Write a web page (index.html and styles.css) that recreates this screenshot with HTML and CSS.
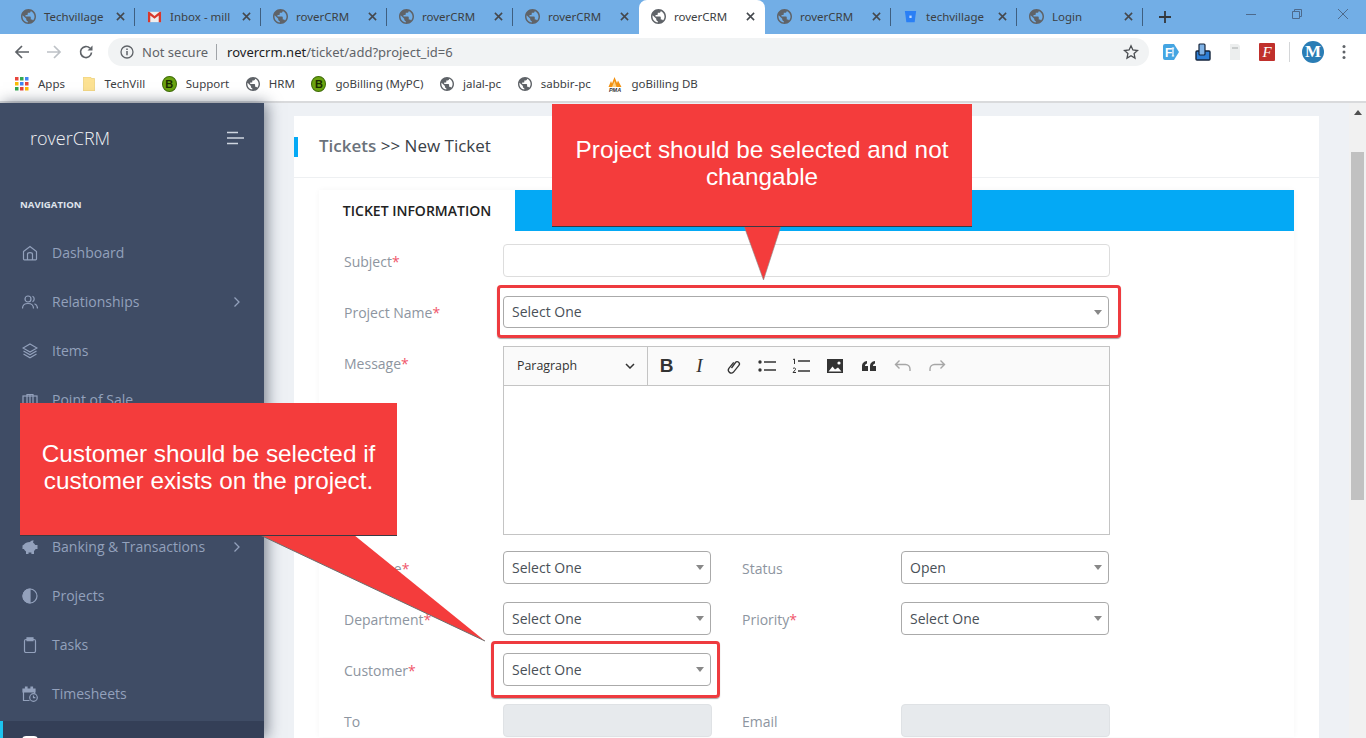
FILE: index.html
```html
<!DOCTYPE html>
<html lang="en">
<head>
    <meta charset="UTF-8">
    <meta name="viewport" content="width=device-width, initial-scale=1.0">
    <title>roverCRM</title>
    <link rel="stylesheet" href="styles.css">
</head>
<body>
    <svg class="defs" width="0" height="0">
        <symbol id="globe" viewBox="2 2 20 20"><path d="M12 2C6.48 2 2 6.48 2 12s4.48 10 10 10 10-4.48 10-10S17.52 2 12 2zm-1 17.93c-3.95-.49-7-3.85-7-7.93 0-.62.08-1.21.21-1.79L9 15v1c0 1.1.9 2 2 2v1.93zm6.9-2.54c-.26-.81-1-1.39-1.9-1.39h-1v-3c0-.55-.45-1-1-1H8v-2h2c.55 0 1-.45 1-1V7h2c1.1 0 2-.9 2-2v-.41c2.93 1.19 5 4.06 5 7.41 0 2.08-.8 3.97-2.1 5.39z" fill="#5f6368"/></symbol>
        <symbol id="close" viewBox="0 0 10 10"><path d="M1 1l8 8M9 1l-8 8" stroke="#44484d" stroke-width="1.7" fill="none"/></symbol>
        <symbol id="chev" viewBox="0 0 8 12"><path d="M1.5 1.5L6 6l-4.5 4.5" stroke="#93a1bc" stroke-width="1.3" fill="none"/></symbol>
    </svg>

    <!-- browser chrome -->
    <div class="tabstrip">
        <div class="tab"><svg class="fav"><use href="#globe"/></svg><span class="tab-title">Techvillage</span><svg class="tab-x"><use href="#close"/></svg></div>
        <div class="tab"><svg class="fav" viewBox="0 0 16 16"><rect x="1" y="3" width="14" height="11" fill="#eee"/><path d="M1 3v11h2.5V7L8 10.5 12.5 7v7H15V3h-1.5L8 7.5 2.500 3z" fill="#d8382c"/></svg><span class="tab-title">Inbox - mill</span><svg class="tab-x"><use href="#close"/></svg></div>
        <div class="tab"><svg class="fav"><use href="#globe"/></svg><span class="tab-title">roverCRM</span><svg class="tab-x"><use href="#close"/></svg></div>
        <div class="tab"><svg class="fav"><use href="#globe"/></svg><span class="tab-title">roverCRM</span><svg class="tab-x"><use href="#close"/></svg></div>
        <div class="tab no-sep"><svg class="fav"><use href="#globe"/></svg><span class="tab-title">roverCRM</span><svg class="tab-x"><use href="#close"/></svg></div>
        <div class="tab active"><svg class="fav"><use href="#globe"/></svg><span class="tab-title">roverCRM</span><svg class="tab-x"><use href="#close"/></svg></div>
        <div class="tab"><svg class="fav"><use href="#globe"/></svg><span class="tab-title">roverCRM</span><svg class="tab-x"><use href="#close"/></svg></div>
        <div class="tab"><svg class="fav" viewBox="0 0 16 16"><path d="M2 2h12l-1.600 12H3.600z" fill="#2a7ff5"/><rect x="6.800" y="7" width="2.400" height="2.600" fill="#bcd8ff"/></svg><span class="tab-title">techvillage</span><svg class="tab-x"><use href="#close"/></svg></div>
        <div class="tab"><svg class="fav"><use href="#globe"/></svg><span class="tab-title">Login</span><svg class="tab-x"><use href="#close"/></svg></div>
        <svg class="new-tab" viewBox="0 0 12 12"><path d="M6 0v12M0 6h12" stroke="#33373b" stroke-width="1.800"/></svg>
        <div class="win-btns">
            <svg viewBox="0 0 10 10"><path d="M0 5.500h10" stroke="#4d6a8c"/></svg>
            <svg viewBox="0 0 10 10"><path d="M.5 2.500h7v7h-7zM2.500 2.500v-2h7v7h-2" stroke="#4d6a8c" fill="none"/></svg>
            <svg viewBox="0 0 10 10"><path d="M0 0l10 10M10 0L0 10" stroke="#4d6a8c"/></svg>
        </div>
    </div>

    <div class="toolbar">
        <svg class="nav-btn" viewBox="0 0 16 16"><path d="M15 8H2M8 2L2 8l6 6" stroke="#5f6368" stroke-width="1.700" fill="none"/></svg>
        <svg class="nav-btn" viewBox="0 0 16 16"><path d="M1 8h13M8 2l6 6-6 6" stroke="#bdc1c6" stroke-width="1.700" fill="none"/></svg>
        <svg class="nav-btn" viewBox="0 0 16 16"><path d="M13.500 8.500a5.500 5.500 0 1 1-1.600-4.400" stroke="#5f6368" stroke-width="1.700" fill="none"/><path d="M14.500 1.500v5h-5z" fill="#5f6368"/></svg>
        <div class="omnibox">
            <svg class="info" viewBox="0 0 14 14"><circle cx="7" cy="7" r="6" stroke="#5f6368" stroke-width="1.300" fill="none"/><path d="M7 6v4.200M7 3.600v1.300" stroke="#5f6368" stroke-width="1.500"/></svg>
            <span class="not-secure">Not secure</span>
            <span class="url"><b>rovercrm.net</b>/ticket/add?project_id=6</span>
            <svg class="star" viewBox="0 0 16 16"><path d="M8 1.800l1.900 4.200 4.600.5-3.400 3.100.9 4.500L8 11.800l-4 2.300.9-4.500L1.500 6.500 6.100 6z" stroke="#4a4d51" stroke-width="1.300" fill="none"/></svg>
        </div>
        <div class="ext-icons">
            <svg viewBox="0 0 16 18"><path d="M2 1h9l5 8-5 8H2a2 2 0 0 1-2-2V3a2 2 0 0 1 2-2z" fill="#45a5e2"/><text x="2" y="13.500" class="ext-fi">F</text><path d="M10 5v8M8.800 5h2.400M8.800 13h2.400" stroke="#fff" stroke-width="1.200"/></svg>
            <svg viewBox="0 0 16 18"><rect x="1" y="8" width="14" height="9" rx="1" fill="#2f7fd6" stroke="#14253c" stroke-width="1.400"/><rect x="4" y="1" width="6" height="11" rx="1" fill="#7fb2e6" stroke="#14253c" stroke-width="1.200"/></svg>
            <svg viewBox="0 0 16 18"><path d="M3 1h8l2 2v14H3z" fill="#eceeee"/><rect x="5" y="4" width="6" height="2" fill="#c9cccc"/></svg>
            <svg viewBox="0 0 16 18"><rect width="16" height="18" rx="1" fill="#c0302c"/><text x="8" y="14" class="ext-f">F</text></svg>
            <span class="ext-sep"></span>
            <span class="avatar">M</span>
            <svg class="dots" viewBox="0 0 4 16"><circle cx="2" cy="2.500" r="1.500"/><circle cx="2" cy="8" r="1.500"/><circle cx="2" cy="13.500" r="1.500"/></svg>
        </div>
    </div>

    <div class="bookmarks">
        <span class="bm"><svg class="bm-ico" viewBox="0 0 14 14"><rect width="3.500" height="3.500" fill="#e8453c"/><rect x="5" width="3.500" height="3.500" fill="#34a853"/><rect x="10" width="3.500" height="3.500" fill="#4285f4"/><rect y="5" width="3.500" height="3.500" fill="#fbbc05"/><rect x="5" y="5" width="3.500" height="3.500" fill="#4285f4"/><rect x="10" y="5" width="3.500" height="3.500" fill="#e8453c"/><rect y="10" width="3.500" height="3.500" fill="#34a853"/><rect x="5" y="10" width="3.500" height="3.500" fill="#e8453c"/><rect x="10" y="10" width="3.500" height="3.500" fill="#fbbc05"/></svg>Apps</span>
        <span class="bm"><svg class="bm-ico" viewBox="0 0 14 14"><path d="M1.500 0h7l1 1.500h3V14h-11z" fill="#fde293" stroke="#e6c766" stroke-width=".6"/></svg>TechVill</span>
        <span class="bm"><span class="b-badge">B</span>Support</span>
        <span class="bm"><svg class="bm-ico"><use href="#globe"/></svg>HRM</span>
        <span class="bm"><span class="b-badge">B</span>goBilling (MyPC)</span>
        <span class="bm"><svg class="bm-ico"><use href="#globe"/></svg>jalal-pc</span>
        <span class="bm"><svg class="bm-ico"><use href="#globe"/></svg>sabbir-pc</span>
        <span class="bm"><svg class="bm-ico pma" viewBox="0 0 16 16"><path d="M1.500 11L4 5l1 2.500L7.500 1 10 7l1-2.500L14.500 11z" fill="#f29111"/><path d="M5 11L7.500 5l2 6z" fill="#fbd38a"/><text x="8" y="15.500" class="pma-text">PMA</text></svg>goBilling DB</span>
    </div>

    <!-- app -->
    <div class="app">
        <aside class="sidebar">
            <div class="brand">
                <span>roverCRM</span>
                <svg class="burger" viewBox="0 0 18 14"><path d="M1 1.500h11M1 7h17M1 12.500h11" stroke="#cfd5e0" stroke-width="1.500"/></svg>
            </div>
            <div class="nav-title">NAVIGATION</div>
            <ul class="nav">
                <li><svg viewBox="0 0 16 16"><path d="M1.500 6.500L8 1.500l6.500 5V14a.8.800 0 0 1-.8.800H2.300a.8.800 0 0 1-.8-.8zM5.500 14.800V9.500c0-1 1-1.800 2.500-1.800s2.500.8 2.500 1.800v5.300"/></svg>Dashboard</li>
                <li><svg viewBox="0 0 16 16"><circle cx="6" cy="5" r="3"/><path d="M.5 14.500c0-3 2.200-5 5.500-5s5.500 2 5.500 5M10.500 2.300a3 3 0 0 1 0 5.400M12.500 9.800c1.900.7 3 2.400 3 4.700"/></svg>Relationships<svg class="chev"><use href="#chev"/></svg></li>
                <li><svg viewBox="0 0 16 16"><path d="M8 1l7 4-7 4-7-4zM1.500 8L8 11.800 14.500 8M1.500 11L8 14.800 14.500 11"/></svg>Items</li>
                <li><svg viewBox="0 0 16 16"><rect x="1" y="4" width="14" height="11"/><path d="M5 15V2.500h6V15M8 2.500V15"/></svg>Point of Sale</li>
                <li></li>
                <li></li>
                <li><svg class="solid" viewBox="0 0 18 16"><path d="M3 5.500C4 4 6 3 9 3c.8-1 2-1.700 3.500-1.700l-.4 2.500c1 .6 1.700 1.400 2.100 2.200H16.500v4h-1.800c-.4.800-1 1.400-1.700 1.900V15h-2.600v-1.500H7.500V15H5v-2.600C4 11.700 3.200 10.800 2.900 10H1.500V6.500z"/></svg>Banking &amp; Transactions<svg class="chev"><use href="#chev"/></svg></li>
                <li><svg viewBox="0 0 16 16"><circle cx="8" cy="8" r="7"/><path class="fill" d="M8 1a7 7 0 0 0 0 14z"/></svg>Projects</li>
                <li><svg viewBox="0 0 16 16"><rect x="2.500" y="2.500" width="11" height="13" rx="1.500"/><path class="fill" d="M5 .8h6v2.800H5z"/></svg>Tasks</li>
                <li><svg viewBox="0 0 16 16"><path class="fill" d="M1 3h12v3H1zM3.500 1h1.500v2H3.500zM9 1h1.500v2H9z"/><path d="M1.500 6v8.500h6M12.500 6v1.500"/><circle cx="11.500" cy="11.500" r="3.800"/><path d="M11.500 9.500v2.200h1.800"/></svg>Timesheets</li>
                <li class="current"><svg viewBox="0 0 16 16"><rect x="1" y="2" width="14" height="12" rx="3"/></svg>Tickets</li>
            </ul>
        </aside>

        <main class="content">
            <div class="card">
                <div class="card-head">
                    <h1><span class="crumb">Tickets</span> &gt;&gt; New Ticket</h1>
                </div>
                <div class="panel">
                    <div class="tabbar"><span class="tabbar-item">TICKET INFORMATION</span></div>
                    <form class="form">
                        <div class="row row-subject">
                            <label>Subject<em>*</em></label>
                            <div class="input"></div>
                        </div>
                        <div class="row row-project">
                            <label>Project Name<em>*</em></label>
                            <div class="select select-wide">Select One</div>
                        </div>
                        <div class="row row-editor">
                            <label>Message<em>*</em></label>
                            <div class="editor">
                                <div class="ed-tools">
                                    <div class="ed-para"><span>Paragraph</span>
                                        <svg viewBox="0 0 10 6"><path d="M1 1l4 4 4-4" stroke="#333" stroke-width="1.500" fill="none"/></svg>
                                    </div>
                                    <div class="ed-btns">
                                        <span class="ed-b">B</span>
                                        <span class="ed-i">I</span>
                                        <svg viewBox="0 0 18 18"><path d="M7.500 11l4-5.500a2.200 2.200 0 0 1 3.400 2.800l-5.600 7a3 3 0 0 1-4.600-3.700l5-6.300" stroke="#333" stroke-width="1.300" fill="none"/></svg>
                                        <svg viewBox="0 0 18 18"><circle cx="2" cy="5" r="1.700" fill="#333"/><circle cx="2" cy="13" r="1.700" fill="#333"/><path d="M6 5h12M6 13h12" stroke="#333" stroke-width="1.500"/></svg>
                                        <svg viewBox="0 0 18 18"><path d="M6 4h12M6 14h12" stroke="#333" stroke-width="1.500"/><path d="M1 2.500L2.500 2v5M1 11.500c1-1 3-.5 2.500 1L1 15.500h3" stroke="#333" stroke-width="1" fill="none"/></svg>
                                        <svg viewBox="0 0 18 18"><path d="M1 2h16v14H1z" fill="#333"/><path d="M2.500 14.500l4-5 2.500 3 3-2 3.500 4z" fill="#fff"/><circle cx="13" cy="6" r="1.600" fill="#fff"/></svg>
                                        <svg viewBox="0 0 18 18"><path d="M2 14V9.500C2 6 4 4.500 7 4v2.500C5.500 7 5 8 5 9h3v5zM10 14V9.500C10 6 12 4.500 15 4v2.500C13.500 7 13 8 13 9h3v5z" fill="#333"/></svg>
                                        <svg viewBox="0 0 18 18"><path d="M5.500 3.500L1.500 7.500l4 4M1.500 7.500h10a4.500 4.500 0 0 1 4.500 4.500v2" stroke="#a6a6a6" stroke-width="1.400" fill="none"/></svg>
                                        <svg viewBox="0 0 18 18"><path d="M12.500 3.500l4 4-4 4M16.500 7.500h-10A4.500 4.500 0 0 0 2 12v2" stroke="#a6a6a6" stroke-width="1.400" fill="none"/></svg>
                                    </div>
                                </div>
                                <div class="ed-body"></div>
                            </div>
                        </div>
                        <div class="row-half">
                            <label>Assignee<em>*</em></label>
                            <div class="select">Select One</div>
                            <label class="col2">Status</label>
                            <div class="select">Open</div>
                        </div>
                        <div class="row-half">
                            <label>Department<em>*</em></label>
                            <div class="select">Select One</div>
                            <label class="col2">Priority<em>*</em></label>
                            <div class="select">Select One</div>
                        </div>
                        <div class="row-half">
                            <label>Customer<em>*</em></label>
                            <div class="select">Select One</div>
                        </div>
                        <div class="row-half">
                            <label>To</label>
                            <div class="input disabled"></div>
                            <label class="col2">Email</label>
                            <div class="input disabled"></div>
                        </div>
                    </form>
                </div>
            </div>
        </main>

        <div class="scrollbar">
            <svg viewBox="0 0 8 5"><path d="M4 0l4 5H0z" fill="#505050"/></svg>
            <div class="thumb"></div>
        </div>
    </div>

    <!-- annotations drawn over the screenshot -->
    <svg class="pointers" viewBox="0 0 1366 738" width="1366" height="738">
        <path d="M744 226l19.500 54L781 226" fill="#f43c3c" stroke="#8a8a8a" stroke-width=".6"/>
        <path d="M260 535l225 106-131-106z" fill="#f43c3c"/>
        <path d="M260 535l225 106" stroke="#6d6d6d" stroke-width="1" fill="none"/>
    </svg>
    <div class="callout callout-project">Project should be selected and not changable</div>
    <div class="callout callout-customer">Customer should be selected if customer exists on the project.</div>
    <div class="mark mark-project"></div>
    <div class="mark mark-customer"></div>
</body>
</html>
```

FILE: styles.css
```css
* {
    box-sizing: border-box;
}
html, body {
    margin: 0;
    height: 738px;
    overflow: hidden;
}
body {
    position: relative;
    display: flex;
    flex-direction: column;
    font-family: "Open Sans", "Noto Sans", sans-serif;
    background: #fff;
}
.defs {
    position: absolute;
}

/* browser chrome */
.tabstrip {
    flex: none;
    height: 34px;
    display: flex;
    align-items: center;
    padding-left: 9px;
    background: #72aee6;
}
.tab {
    position: relative;
    flex: none;
    width: 126px;
    height: 34px;
    display: flex;
    align-items: center;
    padding: 0 10px 2px 12px;
    font-family: "Noto Sans", sans-serif;
    font-size: 11.5px;
    color: #3c4043;
}
.tab::after {
    content: "";
    position: absolute;
    right: 0;
    top: 8px;
    height: 18px;
    border-right: 1px solid #3f5f80;
}
.tab.no-sep::after, .tab.active::after {
    display: none;
}
.tab.active {
    background: #fff;
    border-radius: 8px 8px 0 0;
}
.fav {
    flex: none;
    width: 15px;
    height: 15px;
    margin-right: 8px;
}
.tab-title {
    flex: 1;
    white-space: nowrap;
}
.tab-x {
    flex: none;
    width: 9px;
    height: 9px;
}
.new-tab {
    width: 12px;
    height: 12px;
    margin-left: 16px;
}
.win-btns {
    margin-left: auto;
    display: flex;
    gap: 36px;
    padding: 0 18px 6px 0;
}
.win-btns svg {
    width: 10px;
    height: 10px;
}
.toolbar {
    flex: none;
    height: 35px;
    display: flex;
    align-items: center;
    padding-left: 14px;
}
.nav-btn {
    flex: none;
    width: 16px;
    height: 16px;
    margin-right: 16px;
}
.nav-btn:nth-child(3) {
    margin-right: 14px;
}
.omnibox {
    flex: none;
    width: 1041px;
    height: 28px;
    display: flex;
    align-items: center;
    padding: 0 10px 0 12px;
    border-radius: 14px;
    background: #f1f3f4;
    font-family: "Noto Sans", sans-serif;
    font-size: 13px;
    color: #5f6368;
}
.info {
    width: 14px;
    height: 14px;
    margin-right: 8px;
}
.not-secure {
    padding-right: 8px;
    margin-right: 10px;
    border-right: 1px solid #a0a4a8;
    line-height: 16px;
}
.url b {
    font-weight: 400;
    color: #202124;
}
.star {
    width: 16px;
    height: 16px;
    margin-left: auto;
}
.ext-icons {
    display: flex;
    align-items: center;
    flex: 1;
    padding-left: 14px;
    gap: 16px;
}
.ext-icons svg {
    width: 16px;
    height: 18px;
}
.ext-fi {
    fill: #fff;
    font-family: "Liberation Sans", sans-serif;
    font-size: 12px;
    font-weight: 700;
}
.ext-f {
    fill: #fff;
    font-family: "Liberation Serif", serif;
    font-size: 15px;
    font-style: italic;
    text-anchor: middle;
}
.ext-sep {
    height: 20px;
    margin: 0 -4px 0 -2px;
    border-right: 1px solid #d4d6d8;
}
.avatar {
    flex: none;
    width: 22px;
    height: 22px;
    margin-right: 2px;
    border-radius: 50%;
    background: #2a7db5;
    color: #fff;
    font-family: "Liberation Serif", serif;
    font-size: 17px;
    font-weight: 700;
    line-height: 22px;
    text-align: center;
}
.ext-icons .dots {
    width: 4px;
    height: 16px;
    fill: #5f6368;
}
.bookmarks {
    flex: none;
    height: 34px;
    display: flex;
    align-items: center;
    gap: 16.6px;
    padding: 0 0 3px 15px;
    border-bottom: 2px solid #d9dadc;
    font-family: "Noto Sans", sans-serif;
    font-size: 11.5px;
    color: #3c4043;
}
.bm {
    display: flex;
    align-items: center;
    white-space: nowrap;
}
.bm-ico {
    flex: none;
    width: 14px;
    height: 14px;
    margin-right: 9px;
}
.bm-ico.pma {
    width: 16px;
    height: 16px;
    margin-right: 8px;
}
.pma-text {
    fill: #333;
    font-family: "Liberation Sans", sans-serif;
    font-size: 5.5px;
    font-weight: 700;
    font-style: italic;
    text-anchor: middle;
}
.b-badge {
    flex: none;
    width: 15px;
    height: 16px;
    margin-right: 9px;
    border-radius: 50%;
    border: 1px solid #3d6b06;
    background: #6aa30f;
    color: #1a2c00;
    font-family: "Liberation Sans", sans-serif;
    font-size: 11px;
    font-weight: 700;
    line-height: 14px;
    text-align: center;
}

/* app */
.app {
    flex: 1;
    min-height: 0;
    display: flex;
    background: #eef1f5;
}
.sidebar {
    flex: none;
    width: 264px;
    background: #3f4c65;
    box-shadow: 3px 0 14px rgba(30, 40, 60, .55);
    position: relative;
}
.brand {
    height: 72px;
    display: flex;
    align-items: center;
    justify-content: space-between;
    padding: 0 20px 2px 30px;
    color: #f2f3f5;
    font-size: 18px;
    font-weight: 300;
}
.burger {
    width: 18px;
    height: 14px;
}
.nav-title {
    padding: 23px 0 0 20px;
    height: 53px;
    color: #dfe4ec;
    font-size: 9.6px;
    font-weight: 700;
    line-height: 14px;
}
.nav {
    list-style: none;
    margin: 0;
    padding: 0;
}
.nav li {
    height: 49px;
    display: flex;
    align-items: center;
    padding-left: 22px;
    color: #93a1bc;
    font-size: 14px;
}
.nav li > svg {
    flex: none;
    width: 16px;
    height: 16px;
    margin-right: 14px;
    stroke: #93a1bc;
    stroke-width: 1.200;
    fill: none;
}
.nav li > svg.solid {
    width: 18px;
    margin: 0 13px 0 -1px;
    fill: #93a1bc;
    stroke: none;
}
.nav .fill {
    fill: #93a1bc;
}
.nav li > svg.chev {
    width: 8px;
    height: 12px;
    margin: 0 0 0 auto;
    position: relative;
    right: 23px;
    stroke: none;
}
.nav li.current {
    margin-top: 3px;
    background: #343f57;
    border-left: 3px solid #1cc3ee;
    padding: 0 0 5px 19px;
    color: #fff;
}
.nav li.current > svg {
    stroke: #fff;
    stroke-width: 2;
}
.content {
    flex: 1;
    min-width: 0;
    padding: 13px 30px 0;
    overflow: hidden;
}
.card {
    background: #fff;
    padding-bottom: 30px;
}
.card-head {
    height: 62px;
    display: flex;
    align-items: center;
    padding: 0 0 2px 25px;
    position: relative;
    border-bottom: 1px solid #eef0f2;
}
.card-head::before {
    content: "";
    position: absolute;
    left: 0;
    top: 21px;
    width: 4px;
    height: 20px;
    background: #04a9f5;
}
.card-head h1 {
    margin: 0;
    color: #3a4148;
    font-size: 17px;
    font-weight: 400;
}
.crumb {
    color: #6b727b;
    font-weight: 600;
}
.panel {
    margin: 12px 25px 0;
    box-shadow: 0 0 6px rgba(0, 0, 0, .04);
}
.tabbar {
    height: 41px;
    background: #04a9f5;
}
.tabbar-item {
    display: block;
    width: 196px;
    height: 41px;
    background: #fff;
    color: #222;
    font-size: 14px;
    font-weight: 600;
    line-height: 42px;
    text-align: center;
}
.form {
    padding: 13px 0 0 25px;
}
.row {
    display: grid;
    grid-template-columns: 159px 607px;
    margin-bottom: 18px;
}
.row-subject {
    margin-bottom: 19px;
}
.row-editor {
    margin-bottom: 16px;
}
.row-half {
    display: grid;
    grid-template-columns: 159px 209px 30px 159px 209px;
    margin-bottom: 18px;
}
.col2 {
    grid-column: 4;
}
label {
    padding-top: 8px;
    color: #8d95a0;
    font-size: 14px;
    line-height: 20px;
}
.row-project label {
    padding-top: 7px;
}
label em {
    color: #f0566b;
    font-style: normal;
}
.input {
    height: 33px;
    border: 1px solid #ddd;
    border-radius: 4px;
    background: #fff;
}
.input.disabled {
    background: #e7eaed;
    border-color: #dfe2e5;
}
.select {
    position: relative;
    height: 33px;
    width: 208px;
    padding-left: 8px;
    border: 1px solid #aaa;
    border-radius: 4px;
    color: #495057;
    font-size: 14px;
    line-height: 31px;
    background: #fff;
}
.select-wide {
    width: 606px;
    height: 32px;
    line-height: 30px;
}
.select::after {
    content: "";
    position: absolute;
    right: 6px;
    top: 13px;
    border-style: solid;
    border-width: 5px 4px 0;
    border-color: #888 transparent transparent;
}
.editor {
    border: 1px solid #c4c4c4;
    height: 189px;
    display: flex;
    flex-direction: column;
}
.ed-tools {
    flex: none;
    height: 39px;
    display: flex;
    background: #fafafa;
    border-bottom: 1px solid #c4c4c4;
}
.ed-para {
    width: 144px;
    display: flex;
    align-items: center;
    justify-content: space-between;
    padding: 0 12px 2px 13px;
    border-right: 1px solid #c4c4c4;
    color: #333;
    font-size: 12.4px;
}
.ed-para svg {
    width: 10px;
    height: 6px;
    margin-top: 2px;
}
.ed-btns {
    display: flex;
    align-items: center;
    gap: 14px;
    padding-left: 9px;
}
.ed-btns svg {
    flex: none;
    width: 20px;
    height: 18px;
}
.ed-b, .ed-i {
    width: 19px;
    text-align: center;
    color: #333;
    font-size: 19px;
    line-height: 20px;
}
.ed-b {
    font-family: "Liberation Sans", sans-serif;
    font-weight: 700;
}
.ed-i {
    font-family: "Liberation Serif", serif;
    font-style: italic;
}
.ed-body {
    flex: 1;
    background: #fff;
}
.scrollbar {
    flex: none;
    width: 17px;
    background: #f1f1f1;
    display: flex;
    flex-direction: column;
    align-items: center;
    padding-top: 7px;
}
.scrollbar svg {
    width: 8px;
    height: 5px;
}
.thumb {
    margin-top: 37px;
    width: 13px;
    height: 348px;
    background: #c1c1c1;
}

/* annotations */
.pointers {
    position: absolute;
    left: 0;
    top: 0;
    pointer-events: none;
}
.callout {
    position: absolute;
    background: #f43c3c;
    color: #fff;
    font-family: "Liberation Sans", sans-serif;
    font-size: 24.3px;
    line-height: 27px;
    text-align: center;
    border-bottom: 1px solid #3a3a44;
}
.callout-project {
    left: 552px;
    top: 104px;
    width: 420px;
    height: 123px;
    padding: 32px 20px 0;
}
.callout-customer {
    left: 20px;
    top: 403px;
    width: 377px;
    height: 133px;
    padding: 37px 14px 0;
}
.mark {
    position: absolute;
    border: 3px solid #ee3b3f;
    border-radius: 4px;
    box-shadow: 0 1px 1px rgba(0, 0, 0, .35);
}
.mark-project {
    left: 497px;
    top: 285px;
    width: 624px;
    height: 53px;
}
.mark-customer {
    left: 491px;
    top: 641px;
    width: 229px;
    height: 57px;
}
```
